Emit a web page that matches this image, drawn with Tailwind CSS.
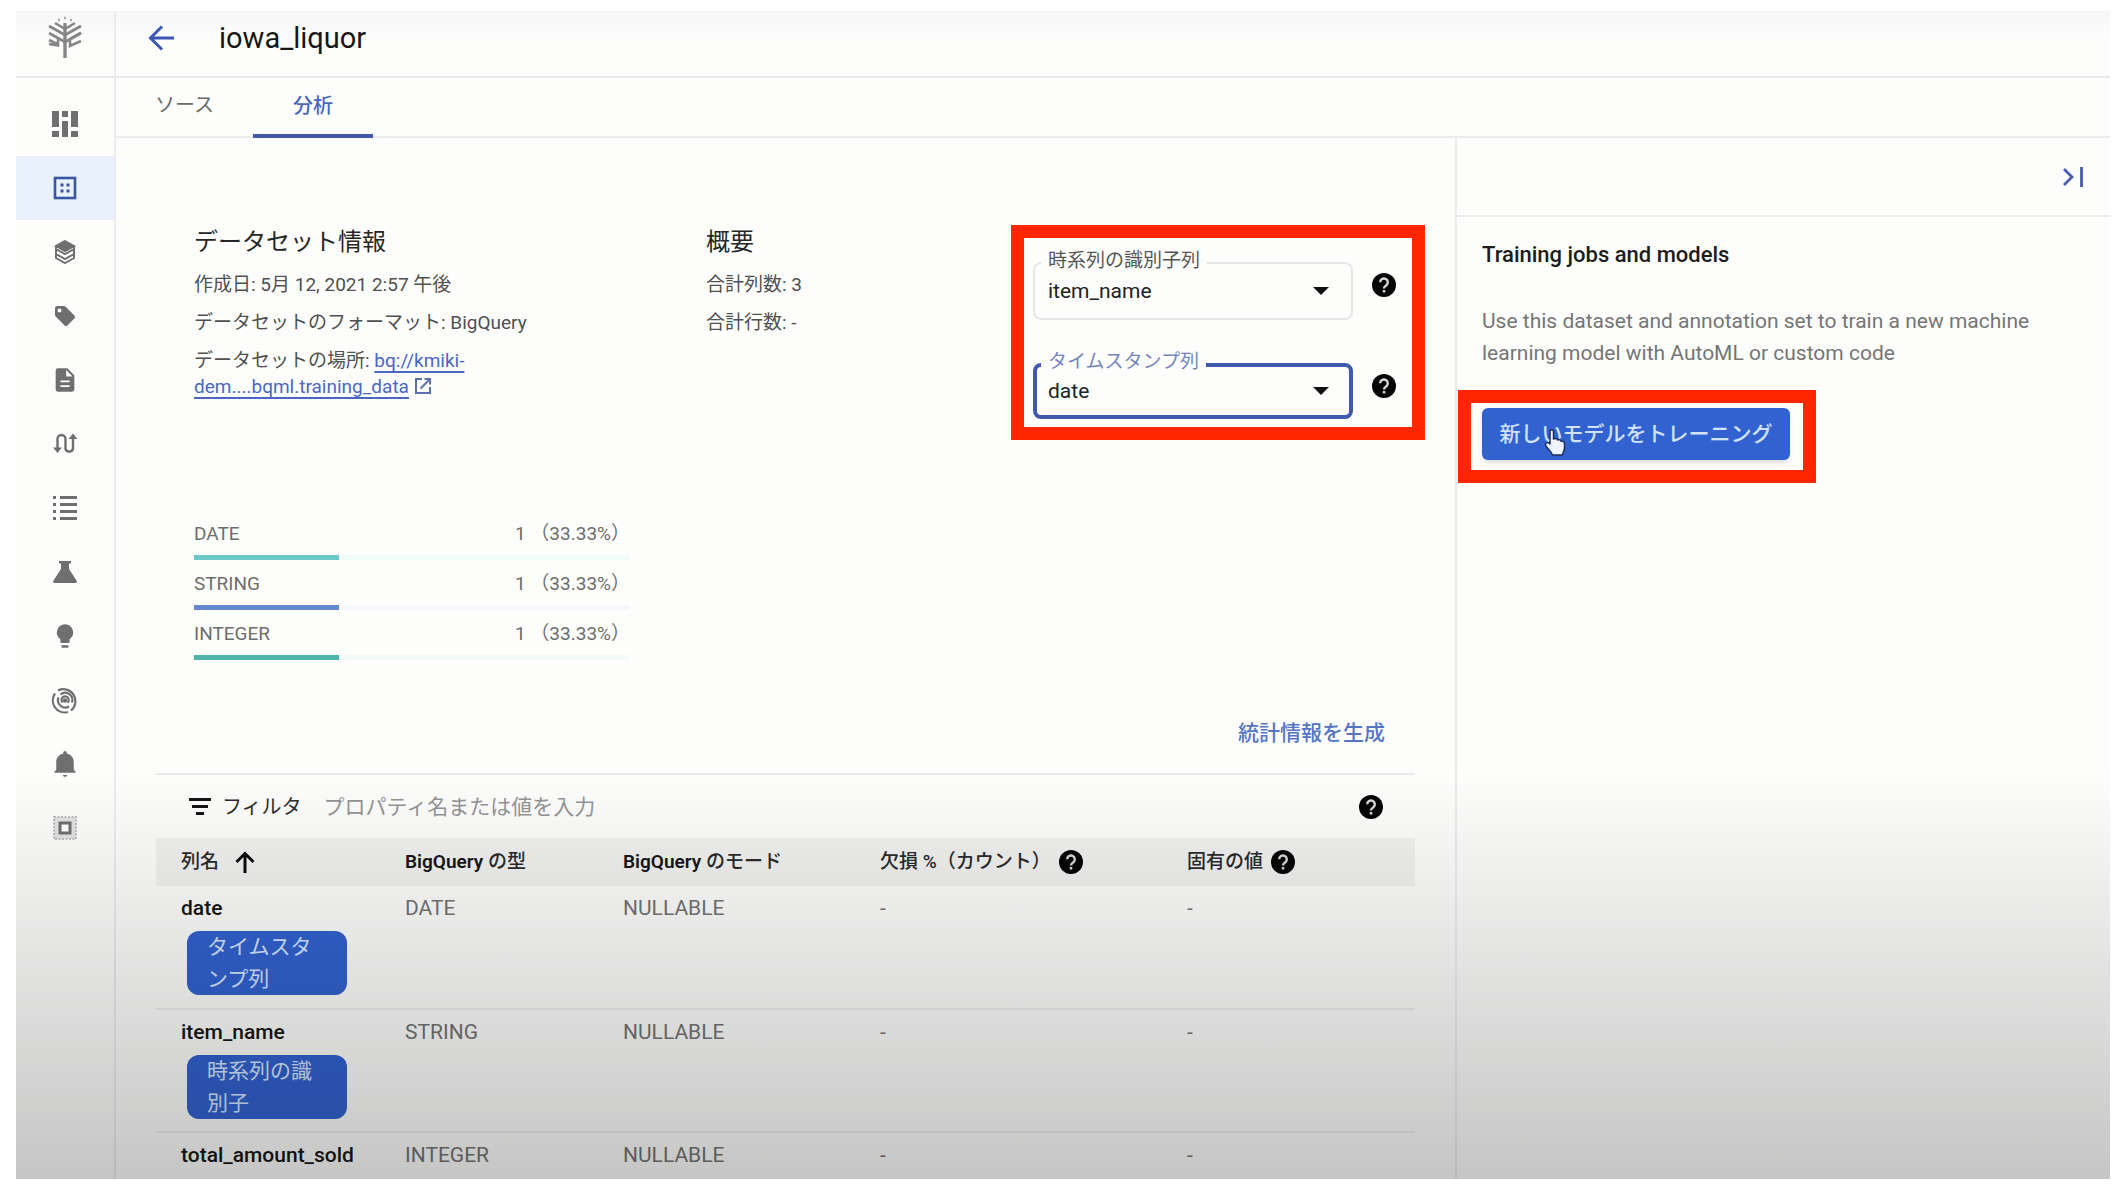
<!DOCTYPE html>
<html lang="ja">
<head>
<meta charset="utf-8">
<meta name="viewport" content="width=device-width, initial-scale=1">
<title>iowa_liquor</title>
<script src="https://cdn.jsdelivr.net/npm/@tailwindcss/browser@4"></script>
</head>
<body class="bg-white font-['Roboto','Noto_Sans_CJK_JP',sans-serif] text-[20px] leading-[26px] text-[#5c5c5c]">
<svg class="hidden" aria-hidden="true">
  <symbol id="help" viewBox="0 0 24 24">
    <circle cx="12" cy="12" r="12" fill="#050505"/>
    <path d="M8.2 9.3a3.8 3.8 0 1 1 6.2 2.9c-1.4 1.1-2.4 1.6-2.4 3.3" fill="none" stroke="#d8d8d8" stroke-width="2.4"/>
    <rect x="10.8" y="17" width="2.5" height="2.5" fill="#d8d8d8"/>
  </symbol>
</svg>
<div class="h-screen pt-[11px] pb-[11px] pl-4 pr-[14px]">
  <div class="relative flex h-full overflow-hidden bg-[#fdfefc]">
    <!-- Side navigation -->
    <aside class="flex w-[100px] shrink-0 flex-col border-r-2 border-[#ececec]">
      <div class="flex h-[67px] shrink-0 items-start justify-center border-b-2 border-[#e9e9e9] bg-linear-to-b from-[#f7f7f7] to-[#fdfefc] to-50% pt-1">
        <svg class="h-11 w-9" viewBox="0 0 36 44" fill="none" stroke="#868686" stroke-width="2.600" aria-label="Vertex AI">
          <path d="M18 8v35" stroke-width="3.400"/>
          <path d="M18 14 8 8M18 14l10-6M18 20 2 11M18 20l16-9M18 27 2 18M18 27l16-9"/>
          <path d="M2 25l10 5M11 23v7.500L2 29M34 18 23 24v7l11-5"/>
          <path d="M17 3h2M11 5h2M23 5h2" stroke="#aaa"/>
        </svg>
      </div>
      <nav class="flex flex-col pt-[14px] text-[#6f6f6f]">
        <a href="#" aria-label="ダッシュボード" class="flex h-16 items-center justify-center">
          <svg class="size-7" viewBox="0 0 28 28" fill="currentColor"><path d="M1 1h7v16H1zM1 21h7v6H1zM11 1h6v6h-6zM11 11h6v16h-6zM20 1h7v16h-7zM20 21h7v6h-7z"/></svg>
        </a>
        <a href="#" aria-label="データセット" aria-current="page" class="flex h-16 items-center justify-center bg-[#e9f1fc] text-[#3b55a4]">
          <svg class="size-6" viewBox="0 0 24 24" fill="none" stroke="currentColor" stroke-width="2.6"><rect x="2" y="2" width="20" height="20"/><path d="M7.5 9h3M13.500 9h3M7.500 15h3M13.500 15h3" stroke-width="3"/></svg>
        </a>
        <a href="#" aria-label="特徴" class="flex h-16 items-center justify-center">
          <svg class="size-6" viewBox="0 0 24 24" fill="none" stroke="currentColor" stroke-width="2"><path d="M12 1 21 6 12 11 3 6z" fill="currentColor"/><path d="M3 6v12l9 5 9-5V6M3 9l9 5 9-5M3 14l9 5 9-5"/></svg>
        </a>
        <a href="#" aria-label="ラベル" class="flex h-16 items-center justify-center">
          <svg class="size-6" viewBox="0 0 24 24" fill="currentColor"><path d="m21.400 11.600-9-9C12 2.200 11.500 2 11 2H4a2 2 0 0 0-2 2v7c0 .5.200 1 .600 1.400l9 9c.400.400.900.600 1.400.600s1-.200 1.400-.600l7-7c.400-.400.600-.900.600-1.400s-.200-1-.600-1.400zM6.500 8.500a2 2 0 1 1 0-4 2 2 0 0 1 0 4z"/></svg>
        </a>
        <a href="#" aria-label="ノートブック" class="flex h-16 items-center justify-center">
          <svg class="size-7" viewBox="0 0 24 24" fill="currentColor"><path d="M14 2H6a2 2 0 0 0-2 2v16c0 1.100.900 2 2 2h12a2 2 0 0 0 2-2V8l-6-6zm2 16H8v-1.600h8V18zm0-4H8v-1.600h8V14zm-3-5V3.500L18.500 9H13z"/></svg>
        </a>
        <a href="#" aria-label="パイプライン" class="flex h-16 items-center justify-center">
          <svg class="size-6" viewBox="0 0 24 24" fill="none" stroke="currentColor" stroke-width="2.400"><path d="M4.500 17V7a4 4 0 0 1 8 0v10a4 4 0 0 0 7.500 0V6"/><path d="M0 15.500h9L4.500 21zM15.500 7h9L20 1.500z" fill="currentColor" stroke="none"/></svg>
        </a>
        <a href="#" aria-label="トレーニング" class="flex h-16 items-center justify-center">
          <svg class="size-6" viewBox="0 0 24 24" fill="currentColor"><path d="M0 0h3v3H0zM7 0h17v3H7zM0 7h3v3H0zM7 7h17v3H7zM0 14h3v3H0zM7 14h17v3H7zM0 21h3v3H0zM7 21h17v3H7z"/></svg>
        </a>
        <a href="#" aria-label="テスト" class="flex h-16 items-center justify-center">
          <svg class="size-6" viewBox="0 0 24 24" fill="currentColor"><path d="M6 1h12v2.500h-2V9l7.500 11.500c.900 1.500.300 2.500-1.500 2.500H2c-1.800 0-2.400-1-1.500-2.500L8 9V3.500H6z"/></svg>
        </a>
        <a href="#" aria-label="モデル" class="flex h-16 items-center justify-center">
          <svg class="size-7" viewBox="0 0 24 24" fill="currentColor"><path d="M9 20h6v1.200c0 .600-.400.800-1 .800h-4c-.600 0-1-.200-1-.800zM12 2a7 7 0 0 0-4 12.700V17c0 .600.400 1 1 1h6c.600 0 1-.400 1-1v-2.300A7 7 0 0 0 12 2z"/></svg>
        </a>
        <a href="#" aria-label="エンドポイント" class="flex h-16 items-center justify-center">
          <svg class="size-7" viewBox="0 0 28 28" fill="none" stroke="currentColor" stroke-width="2.200"><path d="M7 4.500A12 12 0 0 1 20 24.500M17 26A12 12 0 0 1 4 7.500"/><path d="M9.500 8.500a7.300 7.300 0 0 1 11.500 8M18 20.500A7.300 7.300 0 0 1 7.500 11.500"/><path d="M11.500 16.500a3.600 3.600 0 1 1 5 .200"/><circle cx="14" cy="14.500" r="1.200" fill="currentColor"/></svg>
        </a>
        <a href="#" aria-label="通知" class="flex h-16 items-center justify-center">
          <svg class="size-7" viewBox="0 0 24 24" fill="currentColor"><path d="M12 23c1.100 0 1.800-.700 1.800-1.600h-3.600c0 .900.700 1.600 1.800 1.600zM19.500 17V10c0-3.500-2.500-6.300-6-7.100V2.300a1.500 1.500 0 0 0-3 0v.600C7 3.700 4.500 6.500 4.500 10v7L3 18.500v1h18v-1z"/></svg>
        </a>
        <a href="#" aria-label="メタデータ" class="flex h-16 items-center justify-center">
          <svg class="size-6" viewBox="0 0 24 24" fill="none" stroke="currentColor"><rect x="1" y="1" width="22" height="22" fill="#e2e2e2" stroke="#bcbcbc" stroke-width="2" stroke-dasharray="2 1.500"/><rect x="7" y="7" width="10" height="10" fill="#fff" stroke-width="3"/></svg>
        </a>
      </nav>
    </aside>

    <div class="flex min-w-0 flex-1 flex-col">
      <header class="flex h-[67px] shrink-0 items-center border-b-2 border-[#e9e9e9] bg-linear-to-b from-[#f7f7f7] to-[#fdfefc] to-50% pb-3 pl-8">
        <a href="#" aria-label="戻る"><svg class="size-7" viewBox="0 0 28 28" fill="none" stroke="#3c56b5" stroke-width="3"><path d="M26 14H3M14 2.500 2.500 14 14 25.500"/></svg></a>
        <h1 class="ml-[43px] text-[29px] leading-8 text-[#161616]">iowa_liquor</h1>
      </header>
      <nav class="flex h-[60px] shrink-0 border-b-2 border-[#ececec]">
        <a href="#" class="flex w-[137px] items-center justify-center pb-1 text-[#6b6b6b]">ソース</a>
        <a href="#" aria-current="page" class="-mb-[2px] flex w-[120px] items-center justify-center border-b-4 border-[#4159a8] font-medium text-[#4a65bd]">分析</a>
      </nav>

      <div class="flex min-h-0 flex-1">
        <main class="min-w-0 flex-1 overflow-hidden px-10 pt-[86px]">
          <section class="grid grid-cols-[512px_327px_1fr] pl-[38px]">
            <div class="flex max-w-[400px] flex-col gap-3 text-[19px] text-[#505050]">
              <h2 class="text-[24px] leading-9 text-[#262626]">データセット情報</h2>
              <p>作成日: 5月 12, 2021 2:57 午後</p>
              <p>データセットのフォーマット: BigQuery</p>
              <p>データセットの場所: <a href="#" class="text-[#4a67c4] underline decoration-2 underline-offset-4">bq://kmiki-dem....bqml.training_data</a>
                <svg class="inline size-[18px] align-[-2px]" viewBox="0 0 18 18" fill="none" stroke="#5d6fae" stroke-width="2"><path d="M8 2H2v14h14v-6M10.500 2H16v5.500M16 2 6.500 11.500"/></svg></p>
            </div>
            <div class="flex flex-col gap-3 text-[19px] text-[#505050]">
              <h2 class="text-[24px] leading-9 text-[#262626]">概要</h2>
              <p>合計列数: 3</p>
              <p>合計行数: -</p>
            </div>
            <div class="relative mt-[38px] flex w-[363px] flex-col gap-[43px] self-start">
              <div class="flex items-start justify-between">
                <div class="relative w-[320px]">
                  <label for="series" class="absolute -top-[14px] left-2 bg-[#fdfefc] px-[7px] text-[19px] text-[#555]">時系列の識別子列</label>
                  <select id="series" class="h-[58px] w-full appearance-none rounded-lg border-2 border-[#e6e6e6] pl-[13px] text-[21px] text-[#222]"><option>item_name</option></select>
                  <svg class="pointer-events-none absolute top-[25px] right-6 h-2 w-4" viewBox="0 0 16 8"><path d="M0 0h16L8 8z" fill="#111"/></svg>
                </div>
                <button aria-label="ヘルプ" class="mt-[11px]"><svg class="size-6"><use href="#help"/></svg></button>
              </div>
              <div class="flex items-start justify-between">
                <div class="relative w-[320px]">
                  <label for="stamp" class="absolute -top-[14px] left-2 bg-[#fdfefc] px-[7px] text-[19px] text-[#7484bd]">タイムスタンプ列</label>
                  <select id="stamp" class="h-[56px] w-full appearance-none rounded-lg border-4 border-[#4159ac] pl-[11px] text-[21px] text-[#222]"><option>date</option></select>
                  <svg class="pointer-events-none absolute top-6 right-6 h-2 w-4" viewBox="0 0 16 8"><path d="M0 0h16L8 8z" fill="#111"/></svg>
                </div>
                <button aria-label="ヘルプ" class="mt-[11px]"><svg class="size-6"><use href="#help"/></svg></button>
              </div>
              <div class="pointer-events-none absolute -top-[37px] -right-[29px] -bottom-[21px] -left-[22px] border-[13px] border-[#ff2600]"></div>
            </div>
          </section>

          <section class="mt-[102px] ml-[38px] w-[436px] text-[19px] text-[#6d6d6d]">
            <div class="flex h-[50px] flex-col"><div class="flex justify-between"><span>DATE</span><span>1 （33.33%）</span></div><div class="mt-2 h-[5px] bg-[#f1fbf9]"><div class="h-full bg-[#6bcac7]" style="width:33.33%"></div></div></div>
            <div class="flex h-[50px] flex-col"><div class="flex justify-between"><span>STRING</span><span>1 （33.33%）</span></div><div class="mt-2 h-[5px] bg-[#f5f7fb]"><div class="h-full bg-[#6688cc]" style="width:33.33%"></div></div></div>
            <div class="flex h-[50px] flex-col"><div class="flex justify-between"><span>INTEGER</span><span>1 （33.33%）</span></div><div class="mt-2 h-[5px] bg-[#f1fbf8]"><div class="h-full bg-[#4db3ab]" style="width:33.33%"></div></div></div>
          </section>

          <div class="mt-[49px] mb-[27px] flex justify-end pr-[30px]">
            <button class="text-[21px] font-medium text-[#5474c4]">統計情報を生成</button>
          </div>

          <section class="border-t-2 border-[#ebebeb]">
            <div class="flex h-[63px] items-center pr-8 pl-[33px]">
              <svg class="h-[18px] w-[22px]" viewBox="0 0 22 18" fill="#161616"><path d="M0 0h22v3H0zM3 7h16v3H3zM7 14h8v3H7z"/></svg>
              <label for="filter" class="ml-[11px] text-[#2c2c2c]">フィルタ</label>
              <input id="filter" type="text" placeholder="プロパティ名または値を入力" class="ml-[22px] min-w-0 flex-1 text-[21px] placeholder:text-[#949494]">
              <button aria-label="ヘルプ"><svg class="size-6"><use href="#help"/></svg></button>
            </div>
            <table class="w-full table-fixed text-left">
              <colgroup><col class="w-[224px]"><col class="w-[218px]"><col class="w-[257px]"><col class="w-[307px]"><col></colgroup>
              <thead class="bg-[#f1f1f0] text-[19px] text-[#2a2a2a]">
                <tr class="h-12 whitespace-nowrap">
                  <th class="pl-[25px] font-medium"><span class="flex items-center gap-[16px]">列名<svg class="h-[22px] w-5" viewBox="0 0 20 22" fill="none" stroke="#0c0c0c" stroke-width="3"><path d="M10 22V3M1.500 11 10 2.500l8.500 8.500"/></svg></span></th>
                  <th class="pl-[25px] font-medium"><span class="font-semibold text-[#161616]">BigQuery</span> の型</th>
                  <th class="pl-[25px] font-medium"><span class="font-semibold text-[#161616]">BigQuery</span> のモード</th>
                  <th class="pl-[25px] font-medium"><span class="flex items-center gap-2">欠損 %（カウント）<button aria-label="ヘルプ"><svg class="size-6"><use href="#help"/></svg></button></span></th>
                  <th class="pl-[25px] font-medium"><span class="flex items-center gap-2">固有の値<button aria-label="ヘルプ"><svg class="size-6"><use href="#help"/></svg></button></span></th>
                </tr>
              </thead>
              <tbody class="text-[21px] text-[#737373]">
                <tr class="h-[123px] border-b-2 border-[#eeeeee] align-top">
                  <td class="pt-[9px] pl-[25px]"><span class="font-medium text-[#161616]">date</span><span class="mt-[10px] ml-[6px] block h-16 w-40 rounded-xl bg-[#3262cf] px-5 leading-8 text-[#d6e6ff]">タイムスタンプ列</span></td>
                  <td class="pt-[9px] pl-[25px]">DATE</td><td class="pt-[9px] pl-[25px]">NULLABLE</td><td class="pt-[9px] pl-[25px]">-</td><td class="pt-[9px] pl-[25px]">-</td>
                </tr>
                <tr class="h-[123px] border-b-2 border-[#eeeeee] align-top">
                  <td class="pt-[9px] pl-[25px]"><span class="font-medium text-[#161616]">item_name</span><span class="mt-[10px] ml-[6px] block h-16 w-40 rounded-xl bg-[#3262cf] px-5 leading-8 text-[#d6e6ff]">時系列の識別子</span></td>
                  <td class="pt-[9px] pl-[25px]">STRING</td><td class="pt-[9px] pl-[25px]">NULLABLE</td><td class="pt-[9px] pl-[25px]">-</td><td class="pt-[9px] pl-[25px]">-</td>
                </tr>
                <tr class="align-top">
                  <td class="pt-[9px] pl-[25px] font-medium text-[#161616]">total_amount_sold</td>
                  <td class="pt-[9px] pl-[25px]">INTEGER</td><td class="pt-[9px] pl-[25px]">NULLABLE</td><td class="pt-[9px] pl-[25px]">-</td><td class="pt-[9px] pl-[25px]">-</td>
                </tr>
              </tbody>
            </table>
          </section>
        </main>

        <!-- Training panel -->
        <aside class="w-[655px] shrink-0 border-l-2 border-[#ececec]">
          <div class="flex h-[79px] items-center justify-end border-b-2 border-[#ececec] pr-[26px]">
            <button aria-label="パネルを閉じる"><svg class="h-5 w-[22px]" viewBox="0 0 22 20" fill="none" stroke="#4a5db0" stroke-width="2.800"><path d="M2 2l8 8-8 8M19.500 0v20"/></svg></button>
          </div>
          <div class="flex flex-col items-start px-[25px] pt-[22px]">
            <h2 class="text-[22px] leading-8 font-medium text-[#1c1c1c]">Training jobs and models</h2>
            <p class="mt-[34px] max-w-[570px] text-[21px] leading-8 text-[#757575]">Use this dataset and annotation set to train a new machine learning model with AutoML or custom code</p>
            <div class="relative mt-[39px]">
              <button class="h-[52px] w-[308px] rounded-md bg-[#3262cf] text-[21px] font-medium text-[#d2e3ff] shadow-md">新しいモデルをトレーニング</button>
              <svg class="pointer-events-none absolute top-5 left-[62px] h-7 w-[22px]" viewBox="0 0 22 28" fill="#eef5ff" stroke="#1d2f5c" stroke-width="1.500" stroke-linejoin="round"><path d="M6 15V3.500c0-2.500 3.500-2.500 3.500 0V11c3-1 4 0 4 1 2-.700 3.500 0 3.500 1.300 2-.500 3.500.400 3.500 2.200V20c0 2-1.500 4-2 7H8.500C7 23 1.500 19 1.500 16.500c0-2.500 3-2.500 4.500-.500z"/></svg>
              <div class="pointer-events-none absolute -top-[18px] -right-[26px] -bottom-[23px] -left-[24px] border-[13px] border-[#ff2600]"></div>
            </div>
          </div>
        </aside>
      </div>
    </div>
    <!-- Shade over the lower part of the window -->
    <div class="pointer-events-none absolute inset-x-0 bottom-0 h-[410px] bg-linear-to-b from-black/0 to-black/22"></div>
  </div>
</div>
</body>
</html>
